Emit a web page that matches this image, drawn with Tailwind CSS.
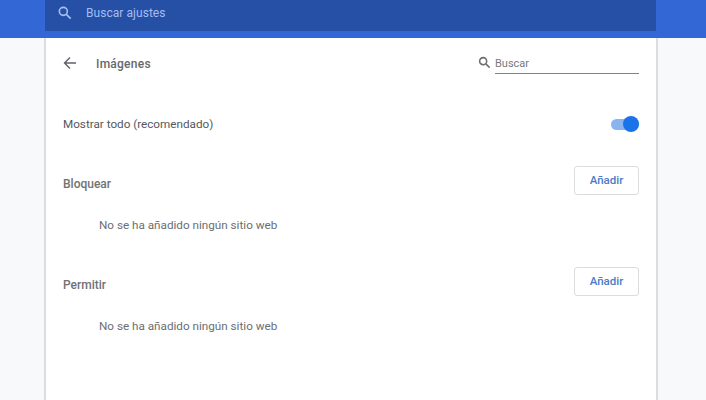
<!DOCTYPE html>
<html><head><meta charset="utf-8"><script src="https://cdn.jsdelivr.net/npm/@tailwindcss/browser@4"></script></head>
<body class="m-0">
<div class="w-[706px] h-[400px] overflow-hidden bg-[#f8f9fa] font-['Roboto',sans-serif] antialiased">
  <header class="h-[38px] bg-[#3367d6]">
    <div class="ml-[45px] w-[611px] h-[31px] bg-[#264fa6] flex items-center pl-[12px] pb-[6px] rounded-b-[1px]">
      <svg class="w-[16px] h-[16px] text-[#a8c0f0]" viewBox="0 0 24 24" fill="none" stroke="currentColor" stroke-width="2.4"><circle cx="9.5" cy="9.5" r="6"/><path d="M14 14l6.5 6.5"/></svg>
      <span class="ml-[13px] text-[12px] text-[#a3bdf2] tracking-[0.05px]">Buscar ajustes</span>
    </div>
  </header>
  <main class="ml-[44px] w-[614px] h-[362px] bg-white border-x-2 border-x-[#dcdddf] pl-[17px] pr-[17px]">
    <div class="h-[50px] flex items-center">
      <svg class="w-[16px] h-[16px] ml-[-1px] text-[#5f6368]" viewBox="0 0 16 16" fill="none" stroke="currentColor" stroke-width="1.4"><path d="M14 8H2.5M8 2.5L2.5 8 8 13.5"/></svg>
      <h1 class="ml-[18px] mt-[2px] text-[12px] font-medium text-[#66686c] tracking-[0.25px]">Imágenes</h1>
      <div class="ml-auto flex items-center">
        <svg class="w-[13px] h-[13px] text-[#6b6e72] mr-[4px] mt-[-2px]" viewBox="0 0 24 24" fill="none" stroke="currentColor" stroke-width="2.8"><circle cx="9.5" cy="9.5" r="6.5"/><path d="M14.5 14.5l7 7"/></svg>
        <div class="w-[144px] h-[24px] border-b border-b-[#808285] flex items-center text-[11px] text-[#77797c] mt-[-2px] pt-[6px]">Buscar</div>
      </div>
    </div>
    <div class="mt-[25px] h-[22px] flex items-center justify-between">
      <span class="pt-[2px] text-[11.7px] text-[#55585c]">Mostrar todo (recomendado)</span>
      <div class="relative w-[28px] h-[11px] rounded-full bg-[#8ab4f0]">
        <span class="absolute right-0 top-[-2.5px] w-[16px] h-[16px] rounded-full bg-[#1a73e8]"></span>
      </div>
    </div>
    <div class="mt-[31px] h-[29px] flex items-center justify-between">
      <span class="pt-[7px] text-[12px] font-medium text-[#707275]">Bloquear</span>
      <button class="w-[65px] h-[29px] rounded-[3px] bg-white border border-[#dadce0] text-[11.5px] font-medium text-[#4a7cc6]">Añadir</button>
    </div>
    <p class="mt-[20px] ml-[36px] h-[21px] leading-[20px] text-[11.7px] text-[#6b6e71]">No se ha añadido ningún sitio web</p>
    <div class="mt-[31px] h-[29px] flex items-center justify-between">
      <span class="pt-[6px] text-[12px] font-medium text-[#707275]">Permitir</span>
      <button class="w-[65px] h-[29px] rounded-[3px] bg-white border border-[#dadce0] text-[11.5px] font-medium text-[#4a7cc6]">Añadir</button>
    </div>
    <p class="mt-[20px] ml-[36px] h-[21px] leading-[20px] text-[11.7px] text-[#6b6e71]">No se ha añadido ningún sitio web</p>
  </main>
</div>
</body></html>
